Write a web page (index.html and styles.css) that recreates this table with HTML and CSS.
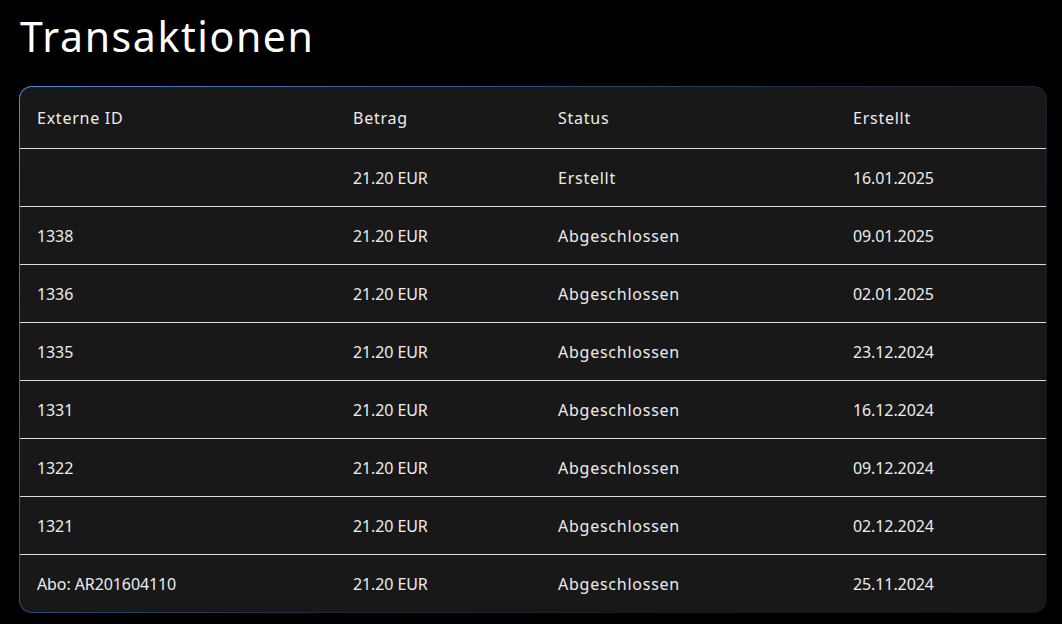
FILE: index.html
```html
<!DOCTYPE html>
<html lang="de">
<head>
<meta charset="utf-8">
<title>Transaktionen</title>
<link rel="stylesheet" href="styles.css">
</head>
<body>
<main class="page">
  <h1 class="title">Transaktionen</h1>
  <div class="card-frame">
    <div class="card">
      <table class="tx">
        <thead>
          <tr><th class="c1">Externe ID</th><th class="c2">Betrag</th><th class="c3">Status</th><th class="c4">Erstellt</th></tr>
        </thead>
        <tbody>
          <tr><td class="num"></td><td class="num">21.20 EUR</td><td>Erstellt</td><td class="num">16.01.2025</td></tr>
          <tr><td class="num">1338</td><td class="num">21.20 EUR</td><td>Abgeschlossen</td><td class="num">09.01.2025</td></tr>
          <tr><td class="num">1336</td><td class="num">21.20 EUR</td><td>Abgeschlossen</td><td class="num">02.01.2025</td></tr>
          <tr><td class="num">1335</td><td class="num">21.20 EUR</td><td>Abgeschlossen</td><td class="num">23.12.2024</td></tr>
          <tr><td class="num">1331</td><td class="num">21.20 EUR</td><td>Abgeschlossen</td><td class="num">16.12.2024</td></tr>
          <tr><td class="num">1322</td><td class="num">21.20 EUR</td><td>Abgeschlossen</td><td class="num">09.12.2024</td></tr>
          <tr><td class="num">1321</td><td class="num">21.20 EUR</td><td>Abgeschlossen</td><td class="num">02.12.2024</td></tr>
          <tr><td class="num">Abo: AR201604110</td><td class="num">21.20 EUR</td><td>Abgeschlossen</td><td class="num">25.11.2024</td></tr>
        </tbody>
      </table>
    </div>
  </div>
</main>
</body>
</html>
```

FILE: styles.css
```css
html, body {
  margin: 0;
  padding: 0;
  background: #000;
  color: #ececec;
  font-family: "Noto Sans", "Open Sans", sans-serif;
}

.page {
  padding: 0 15px 0 19px;
}

.title {
  margin: 0;
  padding: 10px 0 0 1px;
  height: 86px;
  box-sizing: border-box;
  font-size: 41px;
  font-weight: 400;
  line-height: 52px;
  color: #fff;
  letter-spacing: 1.6px;
}

.card-frame {
  padding: 1px;
  border-radius: 13px;
  background: linear-gradient(135deg, #4d8ae0 0%, #3563a3 20%, #2a4a78 35%, #1b2a40 55%, #161a20 75%, #121212 100%);
}

.card {
  background: #181818;
  border-radius: 12px;
  overflow: hidden;
}

.tx {
  width: 100%;
  border-collapse: collapse;
  font-size: 16px;
  letter-spacing: 0.75px;
}

.tx th, .tx td {
  text-align: left;
  font-weight: 400;
  padding: 0 17px;
  white-space: nowrap;
}

.tx td.num {
  letter-spacing: -0.1px;
}

.tx th {
  height: 61px;
  border-bottom: 1px solid #dcdcdc;
}

.tx td {
  height: 57px;
  border-bottom: 1px solid #dcdcdc;
}

.tx tbody tr:last-child td {
  border-bottom: none;
}

.c1 { width: 282px; }
.c2 { width: 171px; }
.c3 { width: 261px; }
```
